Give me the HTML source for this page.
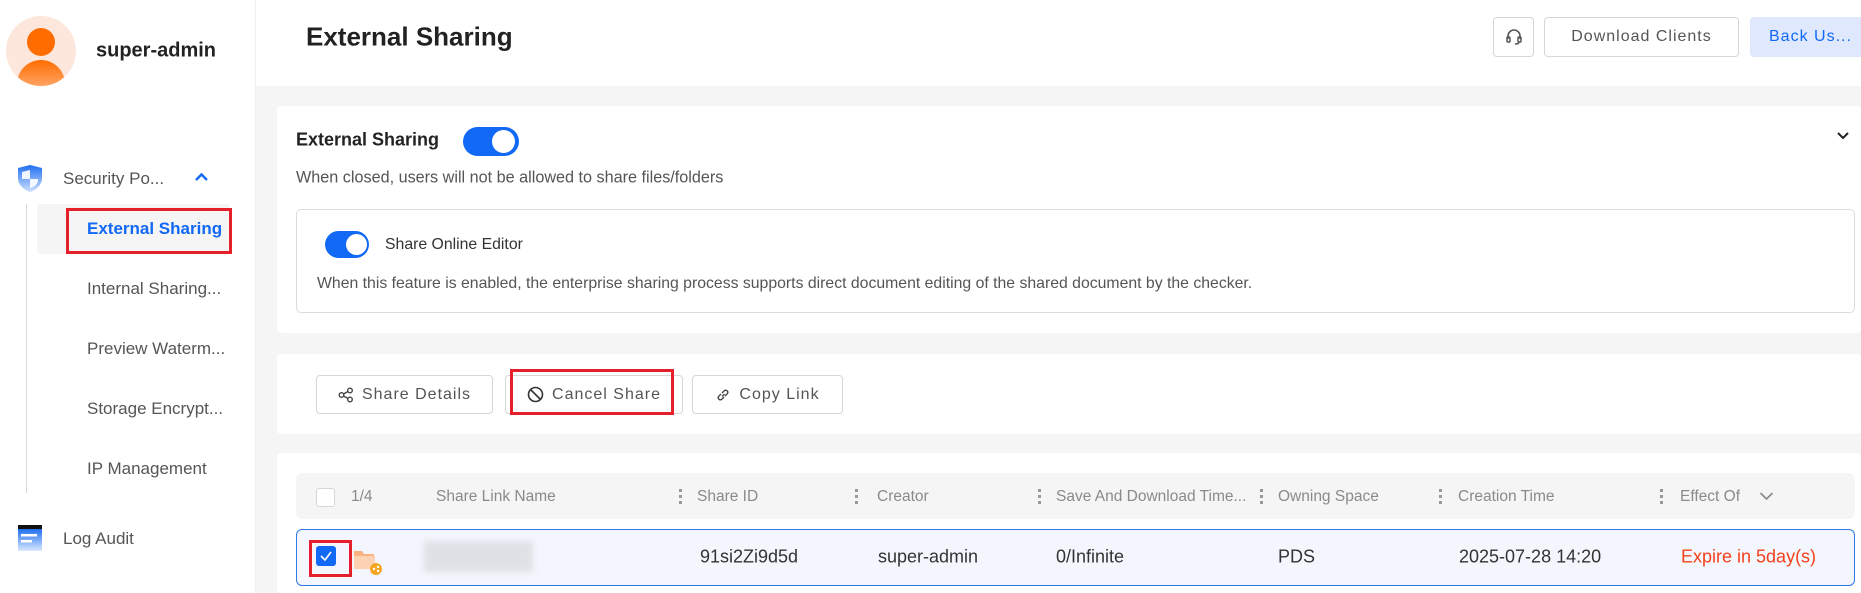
<!DOCTYPE html>
<html><head><meta charset="utf-8"><style>
*{box-sizing:border-box;margin:0;padding:0}
body{width:1861px;height:593px;overflow:hidden;background:#f5f5f5;font-family:"Liberation Sans",sans-serif;position:relative;color:#333}
.a{position:absolute}
.side{left:0;top:0;width:256px;height:593px;background:#fff;border-right:1px solid #f0f0f0}
.hdr{left:256px;top:0;width:1605px;height:86px;background:#fff}
.card{background:#fff;border-radius:4px}
.t{white-space:nowrap;position:absolute;transform:translateY(-50%)}
.btn{position:absolute;border:1px solid #d6d6d6;border-radius:4px;background:#fff;font-size:16px;color:#555;letter-spacing:1px;display:flex;align-items:center;justify-content:center;gap:8px}
.tog{position:absolute;background:#1169f5;border-radius:20px}
.tog i{position:absolute;background:#fff;border-radius:50%}
.th{color:#8a8a8a;font-size:15.5px}
.sep{position:absolute;width:3px;height:16px;top:489px;background:repeating-linear-gradient(#999 0 3px,transparent 3px 6px)}
.td{font-size:18px;color:#333}
.red{position:absolute;border:3px solid #e5202a}
</style></head><body>
<div class="a side"></div>
<div class="a hdr"></div>
<div class="a" style="left:6px;top:16px;width:70px;height:70px;border-radius:50%;background:#fde7dc;overflow:hidden">
 <div class="a" style="left:21px;top:12px;width:28px;height:28px;border-radius:50%;background:#ff6d00"></div>
 <div class="a" style="left:11px;top:44px;width:48px;height:40px;border-radius:24px 24px 0 0;background:linear-gradient(#ff6d00,#ffb07a 80%,#fde7dc)"></div>
</div>
<div class="t" style="left:96px;top:51px;font-size:20px;font-weight:bold;color:#222">super-admin</div>
<svg class="a" style="left:17px;top:164px" width="26" height="29" viewBox="0 0 26 29"><defs><linearGradient id="g" x1="0" y1="0" x2="0" y2="1"><stop offset="0" stop-color="#1f6ff0"/><stop offset="1" stop-color="#cfe0ff"/></linearGradient></defs><path d="M13 1 L25 4 V14 C25 21 19 26 13 28 C7 26 1 21 1 14 V4 Z" fill="url(#g)"/><path d="M13 6 V15 H5 V8 Z" fill="#fff" opacity=".9"/><path d="M13 15 H21 V17 C20 21 17 23 13 24 Z" fill="#fff" opacity=".9"/></svg>
<div class="t" style="left:63px;top:179px;font-size:17px;color:#555">Security Po...</div>
<svg class="a" style="left:194px;top:172px" width="15" height="10" viewBox="0 0 15 10"><path d="M2 8 L7.5 2.5 L13 8" stroke="#1169f5" stroke-width="2.4" fill="none"/></svg>
<div class="a" style="left:26px;top:204px;width:1px;height:289px;background:#d9d9d9"></div>
<div class="a" style="left:37px;top:204px;width:193px;height:50px;background:#f5f5f5;border-radius:4px"></div>
<div class="t" style="left:87px;top:229px;font-size:17px;font-weight:bold;color:#1169f5">External Sharing</div>
<div class="red" style="left:66px;top:208px;width:166px;height:46px"></div>
<div class="t" style="left:87px;top:289px;font-size:17px;color:#555">Internal Sharing...</div>
<div class="t" style="left:87px;top:349px;font-size:17px;color:#555">Preview Waterm...</div>
<div class="t" style="left:87px;top:409px;font-size:17px;color:#555">Storage Encrypt...</div>
<div class="t" style="left:87px;top:469px;font-size:17px;color:#555">IP Management</div>
<svg class="a" style="left:18px;top:525px" width="24" height="28" viewBox="0 0 24 28"><defs><linearGradient id="g2" x1="0" y1="0" x2="0" y2="1"><stop offset="0" stop-color="#1f6ff0"/><stop offset="1" stop-color="#dbe8ff"/></linearGradient></defs><rect x="0" y="0" width="24" height="4" fill="#111"/><rect x="0" y="4" width="24" height="22" fill="url(#g2)"/><rect x="3" y="9" width="16" height="2.5" fill="#fff"/><rect x="3" y="15" width="11" height="2.5" fill="#fff"/></svg>
<div class="t" style="left:63px;top:539px;font-size:17px;color:#555">Log Audit</div>
<div class="t" style="left:306px;top:37px;font-size:26px;font-weight:bold;color:#222">External Sharing</div>
<div class="btn" style="left:1493px;top:17px;width:41px;height:40px"><svg width="18" height="18" viewBox="0 0 18 18"><path d="M3 11 V8 A6 6 0 0 1 15 8 V11" stroke="#555" stroke-width="1.6" fill="none"/><rect x="2" y="9" width="3" height="5" rx="1" fill="none" stroke="#555" stroke-width="1.5"/><rect x="13" y="9" width="3" height="5" rx="1" fill="none" stroke="#555" stroke-width="1.5"/><path d="M14 14 Q14 16 10 16" stroke="#555" stroke-width="1.5" fill="none"/></svg></div>
<div class="btn" style="left:1544px;top:17px;width:195px;height:40px">Download Clients</div>
<div class="btn" style="left:1750px;top:17px;width:120px;height:40px;background:#dfe8fd;border-color:#dfe8fd;color:#1169f5;justify-content:flex-start;padding-left:18px">Back Us...</div>
<div class="a card" style="left:277px;top:106px;width:1584px;height:227px"></div>
<div class="t" style="left:296px;top:140px;font-size:18px;font-weight:bold;color:#222">External Sharing</div>
<div class="tog" style="left:463px;top:127px;width:56px;height:29px"><i style="left:29px;top:3px;width:23px;height:23px"></i></div>
<svg class="a" style="left:1836px;top:131px" width="14" height="9" viewBox="0 0 14 9"><path d="M2 2 L7 7 L12 2" stroke="#222" stroke-width="2" fill="none"/></svg>
<div class="t" style="left:296px;top:178px;font-size:16.2px;color:#555">When closed, users will not be allowed to share files/folders</div>
<div class="a" style="left:296px;top:209px;width:1559px;height:104px;border:1px solid #dcdcdc;border-radius:5px"></div>
<div class="tog" style="left:325px;top:231px;width:44px;height:27px"><i style="left:21px;top:3px;width:21px;height:21px"></i></div>
<div class="t" style="left:385px;top:245px;font-size:15.8px;color:#333">Share Online Editor</div>
<div class="t" style="left:317px;top:284px;font-size:15.8px;color:#555">When this feature is enabled, the enterprise sharing process supports direct document editing of the shared document by the checker.</div>
<div class="a card" style="left:277px;top:354px;width:1584px;height:80px"></div>
<div class="btn" style="left:316px;top:375px;width:177px;height:39px"><svg width="16" height="16" viewBox="0 0 16 16"><circle cx="3.5" cy="8" r="2.3" fill="none" stroke="#444" stroke-width="1.4"/><circle cx="12" cy="3.5" r="2.3" fill="none" stroke="#444" stroke-width="1.4"/><circle cx="12" cy="12.5" r="2.3" fill="none" stroke="#444" stroke-width="1.4"/><path d="M5.5 7 L10 4.5 M5.5 9 L10 11.5" stroke="#444" stroke-width="1.4"/></svg>Share Details</div>
<div class="btn" style="left:505px;top:375px;width:178px;height:39px"><svg width="17" height="17" viewBox="0 0 17 17"><circle cx="8.5" cy="8.5" r="7" fill="none" stroke="#333" stroke-width="1.6"/><path d="M3.5 3.5 L13.5 13.5" stroke="#333" stroke-width="1.6"/></svg>Cancel Share</div>
<div class="red" style="left:510px;top:369px;width:164px;height:46px"></div>
<div class="btn" style="left:692px;top:375px;width:151px;height:39px"><svg width="16" height="16" viewBox="0 0 16 16"><path d="M7 9.5 L9.5 7 M6 7 L3.5 9.5 A2.2 2.2 0 0 0 6.5 12.5 L9 10 M10 9 L12.5 6.5 A2.2 2.2 0 0 0 9.5 3.5 L7 6" stroke="#444" stroke-width="1.4" fill="none"/></svg>Copy Link</div>
<div class="a card" style="left:277px;top:453px;width:1584px;height:140px"></div>
<div class="a" style="left:296px;top:473px;width:1559px;height:46px;background:#f5f5f5;border-radius:6px"></div>
<div class="a" style="left:316px;top:488px;width:19px;height:19px;border:1px solid #d6d6d6;border-radius:3px;background:#fff"></div>
<div class="t th" style="left:351px;top:497px">1/4</div>
<div class="t th" style="left:436px;top:497px">Share Link Name</div>
<div class="sep" style="left:679px"></div><div class="t th" style="left:697px;top:497px">Share ID</div>
<div class="sep" style="left:855px"></div><div class="t th" style="left:877px;top:497px">Creator</div>
<div class="sep" style="left:1038px"></div><div class="t th" style="left:1056px;top:497px">Save And Download Time...</div>
<div class="sep" style="left:1260px"></div><div class="t th" style="left:1278px;top:497px">Owning Space</div>
<div class="sep" style="left:1439px"></div><div class="t th" style="left:1458px;top:497px">Creation Time</div>
<div class="sep" style="left:1660px"></div><div class="t th" style="left:1680px;top:497px">Effect Of</div>
<svg class="a" style="left:1759px;top:491px" width="15" height="10" viewBox="0 0 15 10"><path d="M1.5 2 L7.5 8 L13.5 2" stroke="#888" stroke-width="1.6" fill="none"/></svg>
<div class="a" style="left:296px;top:529px;width:1559px;height:57px;background:#f3f6fd;border:1px solid #2f7ae8;border-radius:6px"></div>
<div class="a" style="left:316px;top:546px;width:20px;height:20px;background:#1169f5;border-radius:3px"></div>
<svg class="a" style="left:316px;top:546px" width="20" height="20" viewBox="0 0 20 20"><path d="M5 10 L9 14 L15 6" stroke="#fff" stroke-width="1.6" fill="none"/></svg>
<div class="red" style="left:309px;top:540px;width:43px;height:37px"></div>
<svg class="a" style="left:352px;top:548px" width="30" height="28" viewBox="0 0 30 28"><path d="M2 3 H10 L12 6 H22 V20 H2 Z" fill="#fbb27f"/><path d="M2 8 H23 V21 H2 Z" fill="#fcd2b3"/><circle cx="24" cy="21" r="6" fill="#f5a623"/><circle cx="22" cy="21" r="1.2" fill="#fff"/><circle cx="26" cy="19" r="1.2" fill="#fff"/><circle cx="26" cy="23" r="1.2" fill="#fff"/></svg>
<div class="a" style="left:424px;top:541px;width:109px;height:31px;background:#dfe1e6;filter:blur(3px)"></div>
<div class="t td" style="left:700px;top:557px">91si2Zi9d5d</div>
<div class="t td" style="left:878px;top:557px">super-admin</div>
<div class="t td" style="left:1056px;top:557px">0/Infinite</div>
<div class="t td" style="left:1278px;top:557px">PDS</div>
<div class="t td" style="left:1459px;top:557px">2025-07-28 14:20</div>
<div class="t td" style="left:1681px;top:557px;color:#f5401b">Expire in 5day(s)</div>
</body></html>
